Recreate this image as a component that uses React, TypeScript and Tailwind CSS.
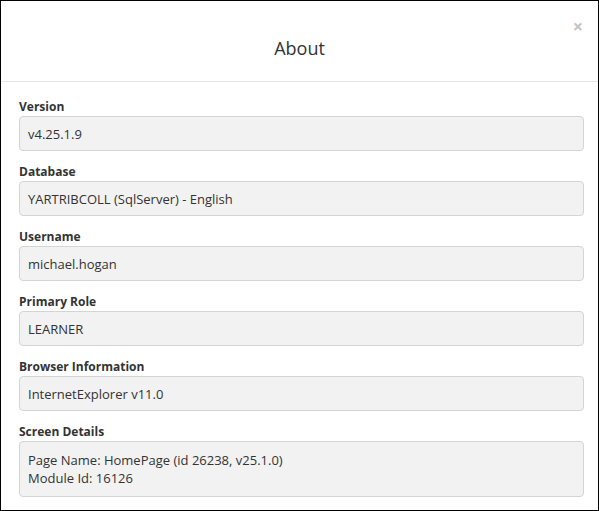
const fields: { label: string; lines: string[] }[] = [
  { label: 'Version', lines: ['v4.25.1.9'] },
  { label: 'Database', lines: ['YARTRIBCOLL (SqlServer) - English'] },
  { label: 'Username', lines: ['michael.hogan'] },
  { label: 'Primary Role', lines: ['LEARNER'] },
  { label: 'Browser Information', lines: ['InternetExplorer v11.0'] },
  { label: 'Screen Details', lines: ['Page Name: HomePage (id 26238, v25.1.0)', 'Module Id: 16126'] },
];

export default function App() {
  return (
    <div
      className="box-border flex h-[511px] w-[599px] flex-col overflow-hidden border border-black bg-white text-[#333]"
      style={{ fontFamily: '"Open Sans", "Noto Sans", sans-serif' }}
    >
      <div className="relative flex h-[81px] shrink-0 items-center justify-center border-b border-[#e5e5e5]">
        <h4 className="pt-[13px] text-[18px] leading-[24px] font-normal">About</h4>
        <span className="absolute top-[15px] right-[15px] text-[18px] leading-[20px] font-bold text-[#c4c4c4]">×</span>
      </div>

      <div className="flex flex-col gap-[10px] pt-[14px] pr-[14px] pl-[18px]">
        {fields.map((field) => (
          <div key={field.label} className="flex flex-col">
            <label className="h-[20px] pt-[2px] text-[12px] leading-[18px] font-bold">{field.label}</label>
            <div
              className={
                field.lines.length > 1
                  ? 'rounded-[4px] border border-[#d4d4d4] bg-[#f2f2f2] px-[8px] pt-[9px] pb-[9px] text-[13px] leading-[18px]'
                  : 'flex h-[35px] items-center rounded-[4px] border border-[#d4d4d4] bg-[#f2f2f2] px-[8px] text-[13px] leading-[18px]'
              }
            >
              <div>
                {field.lines.map((line) => (
                  <div key={line}>{line}</div>
                ))}
              </div>
            </div>
          </div>
        ))}
      </div>
    </div>
  );
}
